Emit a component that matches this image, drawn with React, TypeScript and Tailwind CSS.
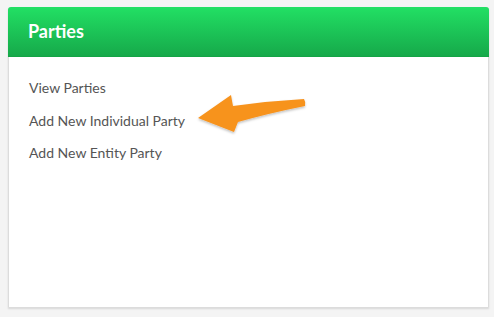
import React from 'react';

const links = ['View Parties', 'Add New Individual Party', 'Add New Entity Party'];

function Arrow() {
  return (
    <svg className="absolute left-[196px] top-[92px]" width="116" height="44" viewBox="196 92 116 44">
      <defs>
        <filter id="sh" x="-10%" y="-20%" width="120%" height="150%">
          <feDropShadow dx="0" dy="1.5" stdDeviation="1.2" floodColor="#000" floodOpacity="0.25" />
        </filter>
      </defs>
      <path
        d="M198 118 L231 95 Q232 101 233 106 Q268 101 304 99 Q306 102 305 106 Q270 113 238 122 L234 132 Z"
        fill="#f7931e"
        filter="url(#sh)"
      />
    </svg>
  );
}

export default function App() {
  return (
    <main className="w-[494px] h-[317px] bg-[#f4f4f4] pt-[7px] pl-[8px] pr-[5px] font-['Lato','Open_Sans',sans-serif] relative">
      <div className="h-[301px] bg-white rounded-t-[3px] border border-[#dcdcdc] shadow-[0_1px_2px_rgba(0,0,0,0.12)] flex flex-col">
        <div className="h-[50px] -mx-px -mt-px rounded-t-[3px] bg-gradient-to-b from-[#22e064] to-[#16a94a] border-b border-[#14a445] flex items-center pl-[20px] pb-[2px]">
          <h1 className="text-white font-bold text-[18px] leading-none">Parties</h1>
        </div>
        <ul className="pt-[21px] pl-[20px] flex flex-col">
          {links.map((l) => (
            <li key={l} className="h-[32.5px] text-[14px] leading-[20px] text-[#555]">
              {l}
            </li>
          ))}
        </ul>
      </div>
      <Arrow />
    </main>
  );
}
